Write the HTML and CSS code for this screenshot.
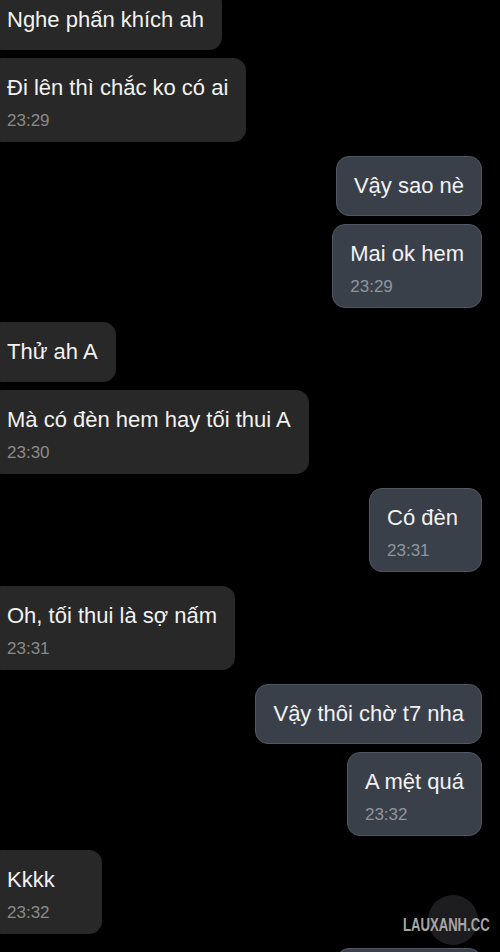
FILE: index.html
```html
<!DOCTYPE html>
<html lang="vi">
<head>
<meta charset="utf-8">
<title>Chat</title>
<link rel="stylesheet" href="styles.css">
</head>
<body>
<main class="chat">
  <section class="group in">
    <div class="bubble"><p class="msg">Nghe phấn khích ah</p></div>
    <div class="bubble"><p class="msg">Đi lên thì chắc ko có ai</p><span class="time">23:29</span></div>
  </section>
  <section class="group out">
    <div class="bubble"><p class="msg">Vậy sao nè</p></div>
    <div class="bubble"><p class="msg">Mai ok hem</p><span class="time">23:29</span></div>
  </section>
  <section class="group in">
    <div class="bubble"><p class="msg">Thử ah A</p></div>
    <div class="bubble"><p class="msg">Mà có đèn hem hay tối thui A</p><span class="time">23:30</span></div>
  </section>
  <section class="group out">
    <div class="bubble"><p class="msg">Có đèn</p><span class="time">23:31</span></div>
  </section>
  <section class="group in">
    <div class="bubble"><p class="msg">Oh, tối thui là sợ nấm</p><span class="time">23:31</span></div>
  </section>
  <section class="group out">
    <div class="bubble"><p class="msg">Vậy thôi chờ t7 nha</p></div>
    <div class="bubble"><p class="msg">A mệt quá</p><span class="time">23:32</span></div>
  </section>
  <section class="group in">
    <div class="bubble"><p class="msg">Kkkk</p><span class="time">23:32</span></div>
  </section>
  <section class="group out">
    <div class="bubble tail"></div>
  </section>
</main>
<div class="watermark"><span class="wm-circle"></span><span class="wm-text">LAUXANH.CC</span></div>
</body>
</html>
```

FILE: styles.css
```css
html, body {
  margin: 0;
  padding: 0;
  background: #000;
  height: 952px;
  overflow: hidden;
}

body {
  font-family: "Liberation Sans", Arial, sans-serif;
  color: #f2f2f2;
  position: relative;
}

.chat {
  display: flex;
  flex-direction: column;
  gap: 14px;
  margin-top: -10px;
}

.group {
  display: flex;
  flex-direction: column;
  gap: 8px;
}

.group.in {
  align-items: flex-start;
  margin-left: -11px;
}

.group.out {
  align-items: flex-end;
  margin-right: 18px;
}

.bubble {
  box-sizing: border-box;
  padding: 14px 18px;
  border-radius: 13px;
  display: flex;
  flex-direction: column;
  min-height: 60px;
  min-width: 113px;
}

.in .bubble {
  background: #282828;
}

.out .bubble {
  background: #3a404a;
  border: 1px solid #525863;
  padding: 13px 17px;
}

.msg {
  margin: 0;
  font-size: 22px;
  line-height: 32px;
  white-space: nowrap;
}

.time {
  display: block;
  margin-top: 10px;
  font-size: 17px;
  line-height: 14px;
  color: #8a8a8a;
}

.out .time {
  color: #8f959d;
}

.tail {
  width: 146px;
  height: 84px;
}

.watermark {
  position: absolute;
  left: 403px;
  top: 895px;
  width: 90px;
  height: 52px;
}

.wm-circle {
  position: absolute;
  left: 25px;
  top: 0;
  width: 50px;
  height: 50px;
  border-radius: 50%;
  background: #1d1d1f;
}

.wm-text {
  position: absolute;
  left: 0;
  top: 20px;
  font-family: "Liberation Sans", Arial, sans-serif;
  font-weight: bold;
  font-size: 19px;
  line-height: 19px;
  color: #a6a6a6;
  white-space: nowrap;
  transform: scaleX(0.69);
  transform-origin: left center;
}
```
